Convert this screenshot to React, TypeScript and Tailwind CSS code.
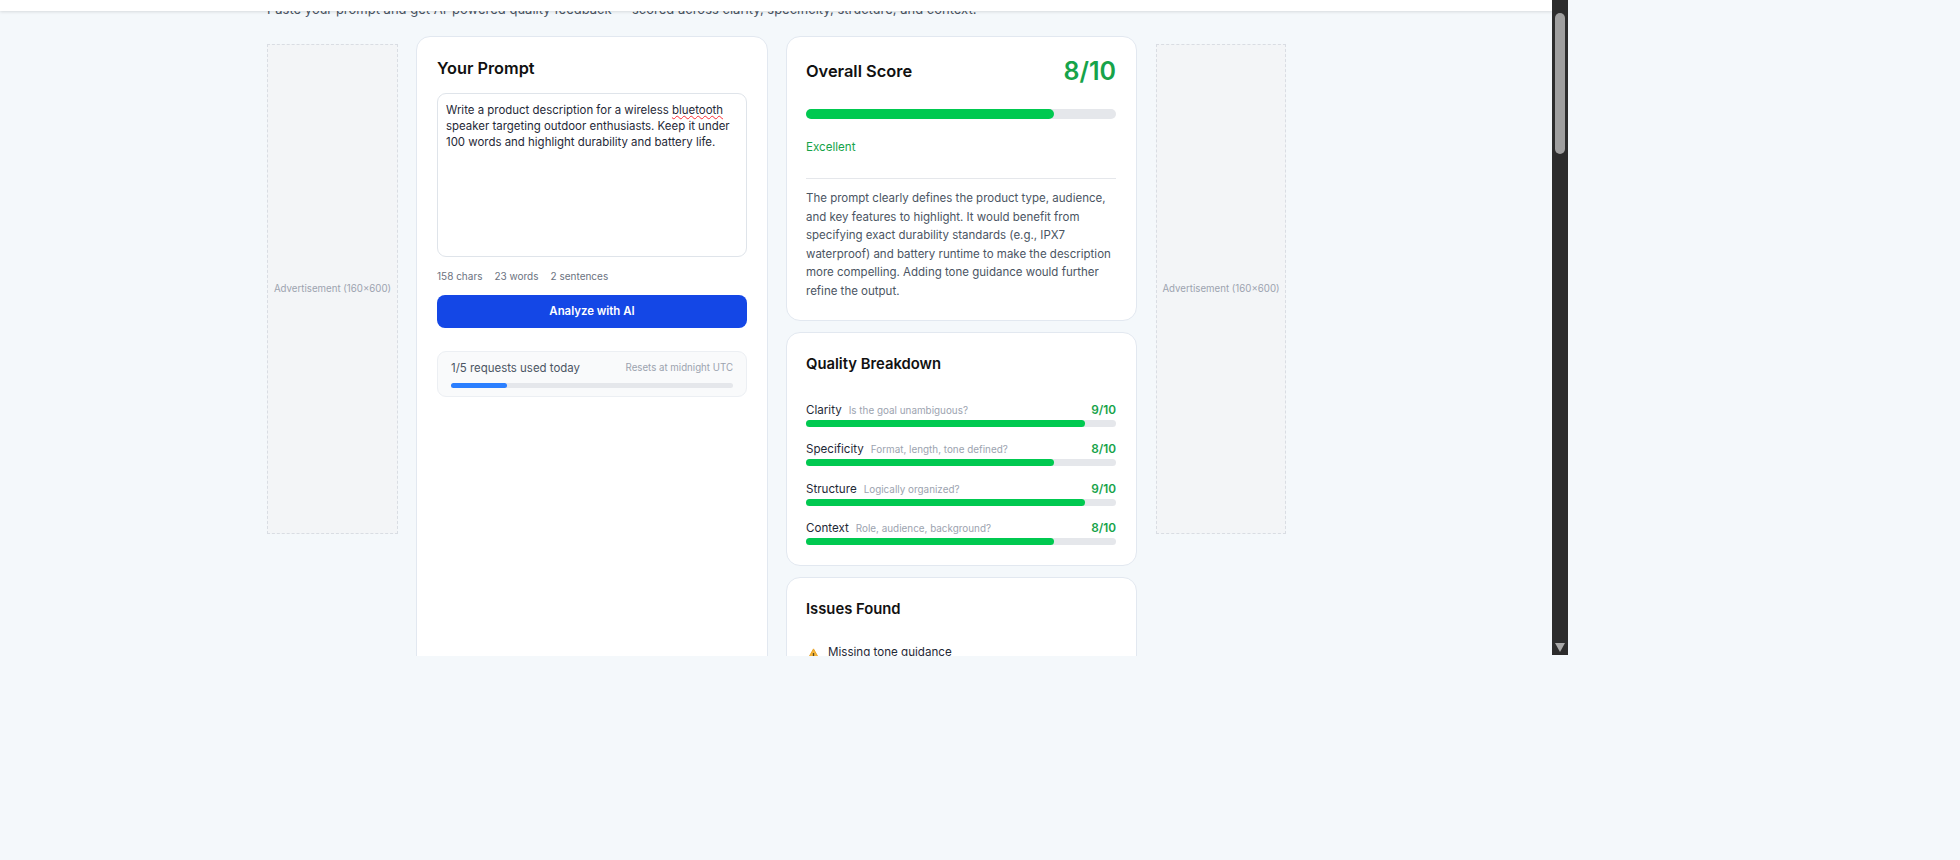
const breakdown = [
  { label: "Clarity", hint: "Is the goal unambiguous?", score: 9, fill: "w-[90%]" },
  { label: "Specificity", hint: "Format, length, tone defined?", score: 8, fill: "w-[80%]" },
  { label: "Structure", hint: "Logically organized?", score: 9, fill: "w-[90%]" },
  { label: "Context", hint: "Role, audience, background?", score: 8, fill: "w-[80%]" },
];

const AdSlot = ({ className }: { className: string }) => (
  <div
    className={`mt-2 flex h-[490px] shrink-0 items-center justify-center border border-dashed border-[#d9dde3] bg-[#f3f5f7] text-[9.7px] text-[#9ca3af] ${className}`}
  >
    Advertisement (160×600)
  </div>
);

const PromptCard = () => (
  <div className="h-[700px] w-[352px] shrink-0 rounded-[14px] border border-[#e2e8f0] bg-white px-5 pt-[20px]">
    <h2 className="text-[16.3px] leading-[22px] font-semibold text-[#111111]">Your Prompt</h2>
    <div className="mt-[14px] h-[164px] rounded-[9px] border border-[#dfe4ea] px-2 py-2 text-[11.45px] leading-4 text-[#1f2937]">
      Write a product description for a wireless{" "}
      <span className="underline decoration-red-500 decoration-wavy decoration-1">bluetooth</span> speaker targeting
      outdoor enthusiasts. Keep it under 100 words and highlight durability and battery life.
    </div>
    <div className="mt-[11px] flex gap-3 text-[10px] leading-4 text-[#6b7280]">
      <span>158 chars</span>
      <span>23 words</span>
      <span>2 sentences</span>
    </div>
    <button className="mt-[11px] h-[33px] w-full rounded-lg bg-[#1447e6] text-[11.4px] font-semibold text-white">
      Analyze with AI
    </button>
    <div className="mt-[23px] h-[46px] rounded-[9px] border border-[#eceff3] bg-[#f9fafb] px-[13px] pt-[8px]">
      <div className="flex items-center justify-between">
        <span className="text-[11.45px] leading-4 text-[#4b5563]">1/5 requests used today</span>
        <span className="text-[9.7px] leading-4 text-[#9ca3af]">Resets at midnight UTC</span>
      </div>
      <div className="mt-[7px] h-[5px] rounded-full bg-[#e5e7eb]">
        <div className="h-full w-1/5 rounded-full bg-[#2b7fff]" />
      </div>
    </div>
  </div>
);

const ScoreCard = () => (
  <div className="h-[285px] rounded-[14px] border border-[#e2e8f0] bg-white pt-[16px] pr-5 pl-[19px]">
    <div className="flex items-center justify-between">
      <h2 className="text-[16.4px] font-semibold text-[#111111]">Overall Score</h2>
      <span className="text-[25px] leading-9 font-semibold text-[#16a34a]">8/10</span>
    </div>
    <div className="mt-[20px] h-[10px] rounded-full bg-[#e5e7eb]">
      <div className="h-full w-4/5 rounded-full bg-[#00c950]" />
    </div>
    <div className="mt-[20px] text-[11.6px] leading-4 text-[#16a34a]">Excellent</div>
    <div className="mt-[23px] border-t border-[#e5e7eb] pt-[10px] text-[11.5px] leading-[18.5px] text-[#4b5563]">
      The prompt clearly defines the product type, audience, and key features to highlight. It would benefit from
      specifying exact durability standards (e.g., IPX7 waterproof) and battery runtime to make the description more
      compelling. Adding tone guidance would further refine the output.
    </div>
  </div>
);

const BreakdownCard = () => (
  <div className="h-[234px] rounded-[14px] border border-[#e2e8f0] bg-white pt-[20px] pr-5 pl-[19px]">
    <h2 className="text-[14.8px] leading-[22px] font-semibold text-[#111111]">Quality Breakdown</h2>
    <div className="mt-[25px] flex flex-col gap-[12.4px]">
      {breakdown.map((row) => (
        <div key={row.label}>
          <div className="flex items-baseline justify-between leading-4">
            <div>
              <span className="text-[11.6px] text-[#1f2937]">{row.label}</span>
              <span className="ml-[7px] text-[9.9px] text-[#9ca3af]">{row.hint}</span>
            </div>
            <span className="text-[11.8px] font-semibold text-[#16a34a]">{row.score}/10</span>
          </div>
          <div className="mt-[2px] h-[7px] rounded-full bg-[#e5e7eb]">
            <div className={`h-full rounded-full bg-[#00c950] ${row.fill}`} />
          </div>
        </div>
      ))}
    </div>
  </div>
);

const IssuesCard = () => (
  <div className="h-[200px] rounded-[14px] border border-[#e2e8f0] bg-white pt-[20px] pr-5 pl-[19px]">
    <h2 className="text-[14.8px] leading-[22px] font-semibold text-[#111111]">Issues Found</h2>
    <div className="mt-[24px] flex items-start gap-[7px]">
      <svg viewBox="0 0 16 16" className="mt-[3px] h-[15px] w-[15px] shrink-0">
        <path d="M8 2 15 14.500 1 14.500Z" fill="#f6b73c" stroke="#e8a020" strokeWidth="1" strokeLinejoin="round" />
        <path d="M8 6.500V10.500M8 12V13" stroke="#5b4a1f" strokeWidth="1.400" />
      </svg>
      <span className="text-[11.6px] leading-4 text-[#1f2937]">Missing tone guidance</span>
    </div>
  </div>
);

const Scrollbar = () => (
  <div className="relative flex h-[655px] w-4 shrink-0 flex-col items-center bg-[#2c2c2c] pt-[13px]">
    <div className="h-[141px] w-[10px] rounded-full bg-[#9f9f9f]" />
    <svg viewBox="0 0 10 9" className="absolute bottom-[3px] left-[3px] h-[9px] w-[10px]">
      <path d="M0 0H10L5 9Z" fill="#a8a8a8" />
    </svg>
  </div>
);

export default function App() {
  return (
    <div className="flex h-[860px] w-full items-start overflow-hidden bg-[#f4f8fb] font-['Inter',sans-serif]">
      <div className="relative h-[656px] w-[1552px] shrink-0 overflow-hidden">
        <div className="absolute inset-x-0 top-0 z-10 h-[11px] bg-white shadow-[0_1px_3px_rgba(0,0,0,0.12)]" />
        <div className="pl-[267px]">
          <p className="text-[13px] leading-[18px] text-[#4b5563]">
            Paste your prompt and get AI-powered quality feedback — scored across clarity, specificity, structure, and
            context.
          </p>
          <div className="mt-[18px] flex items-start gap-[18px]">
            <AdSlot className="w-[131px]" />
            <PromptCard />
            <div className="flex w-[351px] shrink-0 flex-col gap-[11px]">
              <ScoreCard />
              <BreakdownCard />
              <IssuesCard />
            </div>
            <AdSlot className="ml-px w-[130px]" />
          </div>
        </div>
      </div>
      <Scrollbar />
    </div>
  );
}
